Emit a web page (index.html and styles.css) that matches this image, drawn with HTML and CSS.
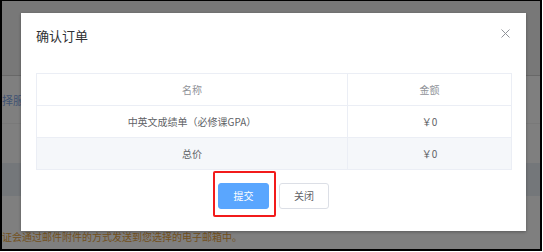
FILE: index.html
```html
<!DOCTYPE html>
<html lang="zh-CN">
<head>
  <meta charset="UTF-8" />
  <title>确认订单</title>
  <link rel="stylesheet" href="styles.css">
</head>
<body>

<div class="shot">
  <div class="page">
    <div class="page-top"></div>
    <div class="page-service">
      <span class="service-link">择服务选择</span>
    </div>
    <div class="page-gap"></div>
    <div class="page-band"></div>
    <div class="page-bottom">
      <p class="notice">证会通过邮件附件的方式发送到您选择的电子邮箱中。</p>
    </div>
  </div>

  <div class="overlay"></div>

  <div class="dialog">
    <div class="dialog-header">
      <span class="dialog-title">确认订单</span>
      <button class="dialog-close" aria-label="关闭">
        <svg width="9" height="9" viewBox="0 0 9 9">
          <path d="M0.5 0.5 L8.5 8.5 M8.5 0.5 L0.5 8.5" stroke="#909399" stroke-width="1" fill="none" />
        </svg>
      </button>
    </div>

    <div class="dialog-body">
      <table class="order-table">
        <thead>
          <tr>
            <th class="col-name">名称</th>
            <th class="col-price">金额</th>
          </tr>
        </thead>
        <tbody>
          <tr>
            <td>中英文成绩单（必修课GPA）</td>
            <td>￥0</td>
          </tr>
          <tr class="total-row">
            <td>总价</td>
            <td>￥0</td>
          </tr>
        </tbody>
      </table>
    </div>

    <div class="dialog-footer">
      <div class="submit-wrap">
        <button class="btn btn-primary">提交</button>
        <span class="mark"></span>
      </div>
      <button class="btn">关闭</button>
    </div>
  </div>
</div>

</body>
</html>
```

FILE: styles.css
```css
html, body {
  margin: 0;
  padding: 0;
  background: #fff;
  font-family: "Noto Sans CJK SC", "Noto Sans", sans-serif;
}

.shot {
  position: relative;
  width: 542px;
  height: 251px;
  box-sizing: border-box;
  border: 2px solid #000;
  border-top-width: 1px;
  overflow: hidden;
}

/* page underneath the dialog */
.page {
  display: flex;
  flex-direction: column;
  height: 100%;
  background: #fff;
}

.page-top {
  height: 74px;
  background: #f0f0f0;
  border-bottom: 1px solid #d0d0d0;
}

.page-service {
  height: 47px;
  display: flex;
  align-items: center;
  border-bottom: 1px solid #f2f2f2;
}

.service-link {
  font-size: 11px;
  color: #7ea6e6;
  white-space: nowrap;
}

.page-gap {
  height: 39px;
}

.page-band {
  height: 33px;
  background: #e9eef5;
}

.page-bottom {
  flex: 1;
}

.notice {
  margin: 35px 0 0;
  font-size: 10px;
  line-height: 12px;
  color: #e6a23c;
  white-space: nowrap;
}

.overlay {
  position: absolute;
  inset: 0;
  background: rgba(0, 0, 0, 0.5);
}

/* dialog */
.dialog {
  position: absolute;
  left: 19px;
  top: 12px;
  width: 505px;
  height: 218px;
  background: #fff;
  box-shadow: 0 1px 3px rgba(0, 0, 0, 0.3);
}

.dialog-header {
  position: relative;
  padding: 14px 15px 0;
}

.dialog-title {
  display: block;
  font-size: 13px;
  line-height: 17px;
  color: #303133;
}

.dialog-close {
  position: absolute;
  top: 16px;
  right: 16px;
  width: 9px;
  height: 9px;
  padding: 0;
  border: none;
  background: none;
  display: flex;
}

.dialog-body {
  padding: 29px 15px 0;
}

.order-table {
  width: 476px;
  border-collapse: collapse;
  border: 1px solid #ebeef5;
  font-size: 10px;
}

.order-table th,
.order-table td {
  height: 31px;
  padding: 0;
  text-align: center;
  border-bottom: 1px solid #ebeef5;
  border-right: 1px solid #ebeef5;
  font-weight: 400;
}

.order-table th {
  color: #909399;
}

.order-table td {
  color: #606266;
}

.col-name {
  width: 310px;
}

.total-row td {
  background: #f5f7fa;
}

.dialog-footer {
  display: flex;
  justify-content: center;
  gap: 10px;
  margin-top: 13px;
}

.submit-wrap {
  position: relative;
  display: flex;
}

.btn {
  height: 26px;
  padding: 0 14px;
  font-family: inherit;
  font-size: 10px;
  line-height: 1;
  color: #606266;
  background: #fff;
  border: 1px solid #dcdfe6;
  border-radius: 3px;
}

.btn-primary {
  width: 51px;
  color: #fff;
  background: #5aa6fe;
  border-color: #5aa6fe;
}

/* red annotation frame round the submit button */
.mark {
  position: absolute;
  left: -5px;
  top: -12px;
  width: 63px;
  height: 46px;
  box-sizing: border-box;
  border: 2px solid #f21b1b;
  border-radius: 2px;
}
```
